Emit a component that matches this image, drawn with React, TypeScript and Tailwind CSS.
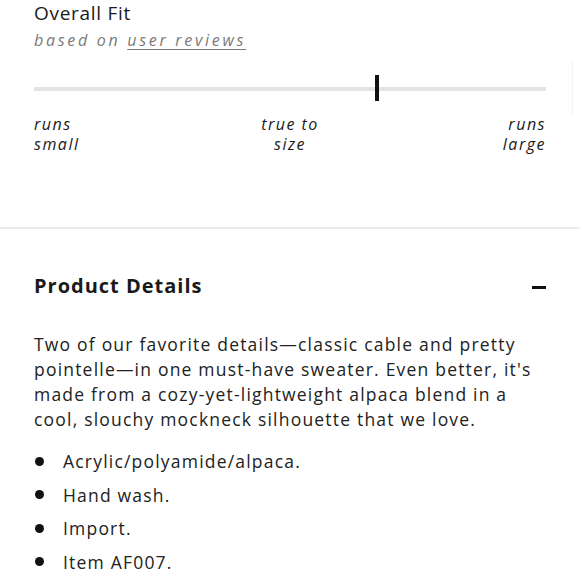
import { useState } from "react"

const bullets = ["Acrylic/polyamide/alpaca.", "Hand wash.", "Import.", "Item AF007."]

export default function App() {
  const [open, setOpen] = useState(true)

  return (
    <div className="w-[580px] h-[580px] overflow-hidden bg-white text-[#1a1a1a] font-['Open_Sans',sans-serif]">

      {/* Overall Fit */}
      <section className="relative px-[34px] h-[227px]">
        <div className="absolute right-[7px] top-[60px] h-[55px] w-px bg-[#f2f2f2]" />
        <h3 className="text-[19px] leading-[26px] tracking-[0.7px]">Overall Fit</h3>
        <p className="mt-[2px] text-[16px] leading-[24px] italic tracking-[2.7px] text-[#7a7a7a]">
          based on <span className="underline underline-offset-[3px] decoration-[1px]">user reviews</span>
        </p>

        <div className="relative mt-[35px] h-[4px] bg-[#e3e3e3]">
          <div className="absolute left-[341px] top-[-12px] w-[4px] h-[26px] bg-[#111]" />
        </div>

        <div className="mt-[23px] grid grid-cols-3 text-[16px] leading-[20px] italic tracking-[1.5px]">
          <div>runs<br />small</div>
          <div className="text-center">true to<br />size</div>
          <div className="text-right">runs<br />large</div>
        </div>
      </section>

      <div className="h-[2px] bg-[#ececec]" />

      {/* Product Details */}
      <section className="px-[34px]">
        <button
          onClick={() => setOpen(!open)}
          className="mt-[43px] w-full flex items-center justify-between"
        >
          <span className="text-[20px] leading-[28px] font-bold tracking-[1px]">Product Details</span>
          <span className="w-[14px] h-[3px] bg-[#111] mt-[2px]" />
        </button>

        {open && (
          <>
            <p className="mt-[32px] text-[17.5px] leading-[25px] text-[#222] tracking-[1.2px]">
              Two of our favorite details—classic cable and pretty pointelle—in one must-have sweater. Even better, it's made from a cozy-yet-lightweight alpaca blend in a cool, slouchy mockneck silhouette that we love.
            </p>
            <ul className="mt-[17px] flex flex-col gap-[9px] text-[17.5px] leading-[24.5px] text-[#222] tracking-[1.2px]">
              {bullets.map((b) => (
                <li key={b} className="flex items-center">
                  <span className="ml-[1px] w-[9px] h-[9px] rounded-full bg-[#111]" />
                  <span className="ml-[19px]">{b}</span>
                </li>
              ))}
            </ul>
          </>
        )}
      </section>
    </div>
  )
}
